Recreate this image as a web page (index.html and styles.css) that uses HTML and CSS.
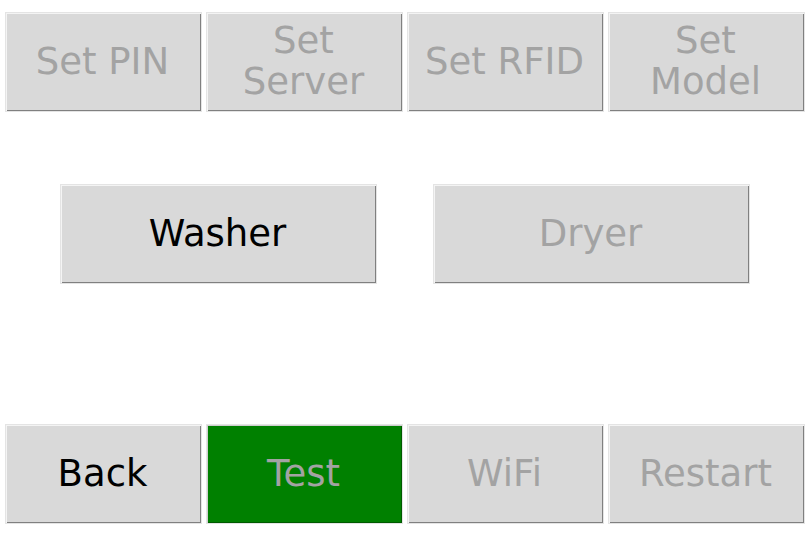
FILE: index.html
```html
<!DOCTYPE html>
<html>
<head>
<meta charset="utf-8">
<link rel="stylesheet" href="styles.css">
</head>
<body>
<div class="screen">
  <div class="row row-top">
    <div class="btn disabled">Set PIN</div>
    <div class="btn disabled">Set<br>Server</div>
    <div class="btn disabled">Set RFID</div>
    <div class="btn disabled">Set<br>Model</div>
  </div>
  <div class="row row-mid">
    <div class="btn wide">Washer</div>
    <div class="btn wide disabled">Dryer</div>
  </div>
  <div class="row row-bottom">
    <div class="btn">Back</div>
    <div class="btn disabled green">Test</div>
    <div class="btn disabled">WiFi</div>
    <div class="btn disabled">Restart</div>
  </div>
</div>
</body>
</html>
```
FILE: styles.css
```css
html, body {
  margin: 0;
  padding: 0;
  background: #ffffff;
}
.screen {
  width: 808px;
  height: 540px;
  padding-top: 12px;
  box-sizing: border-box;
  font-family: "DejaVu Sans", sans-serif;
}
.row {
  display: flex;
  gap: 4px;
}
.row-top, .row-bottom {
  padding-left: 5px;
}
.row-mid {
  margin-top: 72px;
  padding-left: 60px;
  gap: 56px;
}
.row-bottom {
  margin-top: 140px;
}
.btn {
  width: 197px;
  height: 100px;
  box-sizing: border-box;
  border: 1px solid #e4e4e4;
  background: #d9d9d9;
  box-shadow: inset 1px 1px 0 #f4f4f4, inset -1px -1px 0 #808080;
  display: flex;
  align-items: center;
  justify-content: center;
  text-align: center;
  padding: 0 2px 2px 0;
  font-size: 37px;
  line-height: 41px;
  color: #000000;
}
.btn.wide {
  width: 317px;
}
.btn.disabled {
  color: #a3a3a3;
}
.btn.green {
  background: #008000;
  box-shadow: inset 1px 1px 0 #cfcfcf, inset -1px -1px 0 #005a00;
}
```
